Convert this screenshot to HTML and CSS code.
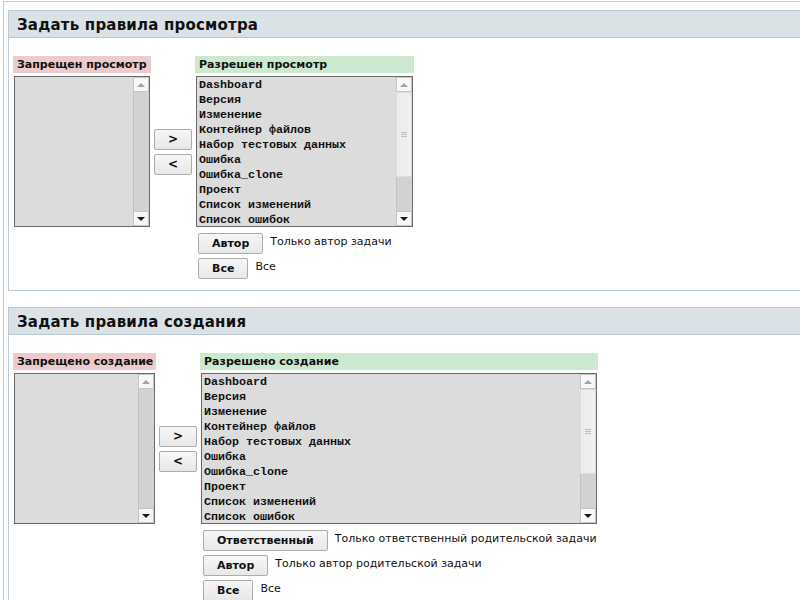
FILE: index.html
```html
<!DOCTYPE html>
<html lang="ru">
<head>
<meta charset="utf-8">
<title>Правила</title>
<link rel="stylesheet" href="styles.css">
</head>
<body>
<div class="page">
  <section class="panel">
    <h2 class="panel-title">Задать правила просмотра</h2>
    <div class="rules rules-view">
      <div class="lbl lbl-deny">Запрещен просмотр</div>
      <div class="spacer"></div>
      <div class="lbl lbl-allow">Разрешен просмотр</div>

      <div class="listbox">
        <div class="items"></div>
        <div class="sb">
          <div class="sb-btn sb-up"><span class="tri-up"></span></div>
          <div class="sb-track"></div>
          <div class="sb-btn sb-down"><span class="tri-down"></span></div>
        </div>
      </div>
      <div class="moves">
        <button class="btn btn-move">&gt;</button>
        <button class="btn btn-move">&lt;</button>
      </div>
      <div class="listbox">
        <div class="items">
          <div>Dashboard</div>
          <div>Версия</div>
          <div>Изменение</div>
          <div>Контейнер файлов</div>
          <div>Набор тестовых данных</div>
          <div>Ошибка</div>
          <div>Ошибка_clone</div>
          <div>Проект</div>
          <div>Список изменений</div>
          <div>Список ошибок</div>
        </div>
        <div class="sb">
          <div class="sb-btn sb-up"><span class="tri-up"></span></div>
          <div class="sb-thumb"><span class="grip"></span></div>
          <div class="sb-track sb-track-low"></div>
          <div class="sb-btn sb-down"><span class="tri-down"></span></div>
        </div>
      </div>

      <div class="spacer"></div>
      <div class="spacer"></div>
      <div class="opts">
        <div class="opt"><button class="btn">Автор</button><span class="opt-text">Только автор задачи</span></div>
        <div class="opt"><button class="btn">Все</button><span class="opt-text">Все</span></div>
      </div>
    </div>
  </section>

  <section class="panel">
    <h2 class="panel-title">Задать правила создания</h2>
    <div class="rules rules-create">
      <div class="lbl lbl-deny">Запрещено создание</div>
      <div class="spacer"></div>
      <div class="lbl lbl-allow">Разрешено создание</div>

      <div class="listbox">
        <div class="items"></div>
        <div class="sb">
          <div class="sb-btn sb-up"><span class="tri-up"></span></div>
          <div class="sb-track"></div>
          <div class="sb-btn sb-down"><span class="tri-down"></span></div>
        </div>
      </div>
      <div class="moves">
        <button class="btn btn-move">&gt;</button>
        <button class="btn btn-move">&lt;</button>
      </div>
      <div class="listbox">
        <div class="items">
          <div>Dashboard</div>
          <div>Версия</div>
          <div>Изменение</div>
          <div>Контейнер файлов</div>
          <div>Набор тестовых данных</div>
          <div>Ошибка</div>
          <div>Ошибка_clone</div>
          <div>Проект</div>
          <div>Список изменений</div>
          <div>Список ошибок</div>
        </div>
        <div class="sb">
          <div class="sb-btn sb-up"><span class="tri-up"></span></div>
          <div class="sb-thumb"><span class="grip"></span></div>
          <div class="sb-track sb-track-low"></div>
          <div class="sb-btn sb-down"><span class="tri-down"></span></div>
        </div>
      </div>

      <div class="spacer"></div>
      <div class="spacer"></div>
      <div class="opts">
        <div class="opt"><button class="btn">Ответственный</button><span class="opt-text">Только ответственный родительской задачи</span></div>
        <div class="opt"><button class="btn">Автор</button><span class="opt-text">Только автор родительской задачи</span></div>
        <div class="opt"><button class="btn">Все</button><span class="opt-text">Все</span></div>
      </div>
    </div>
  </section>
</div>
</body>
</html>
```
FILE: styles.css
```css
html, body {
  margin: 0;
  padding: 0;
  overflow: hidden;
  background: #ffffff;
}
body {
  font-family: "DejaVu Sans", Verdana, sans-serif;
  font-size: 11px;
  color: #111;
}
.page {
  width: 1000px;
  margin: 1px 0 0 3px;
  border-top: 1px solid #bccbd7;
  border-left: 1px solid #bccbd7;
  padding: 8px 0 0 4px;
}
.panel {
  border: 1px solid #b9c9d6;
  margin-bottom: 16px;
  padding: 0 0 11px 0;
}
.panel-title {
  margin: 0;
  height: 26px;
  line-height: 28px;
  padding-left: 8px;
  background: #dbe2e6;
  border-bottom: 1px solid #b6c6d2;
  font-size: 15px;
  font-weight: bold;
  letter-spacing: 0.2px;
  color: #111;
  overflow: hidden;
}
.rules {
  display: grid;
  grid-template-rows: 17px 151px auto;
  row-gap: 3px;
  margin: 18px 0 0 4px;
}
.rules-view { grid-template-columns: 138px 44px 219px; }
.rules-create { grid-template-columns: 143px 44px 398px; }
.lbl {
  line-height: 17px;
  height: 17px;
  padding-left: 4px;
  font-weight: bold;
  font-size: 11px;
  white-space: nowrap;
}
.lbl-deny { background: #ebcbcb; }
.lbl-allow { background: #cce9cf; }
.listbox {
  margin: 0 1px;
  border: 1px solid #6a6a6a;
  background: #dcdcdc;
  display: flex;
  overflow: hidden;
}
.items {
  flex: 1;
  padding: 1px 0 0 2px;
  font-family: "Liberation Mono", "Courier New", monospace;
  font-weight: bold;
  font-size: 11.67px;
  line-height: 15px;
  color: #111;
  white-space: nowrap;
}
.sb {
  width: 16px;
  display: flex;
  flex-direction: column;
  background: #d3d3d3;
}
.sb-btn {
  height: 15px;
  box-sizing: border-box;
  background: #f7f7f7;
  border: 1px solid #c4c4c4;
  display: flex;
  align-items: center;
  justify-content: center;
}
.tri-up {
  width: 0; height: 0;
  border-left: 4px solid transparent;
  border-right: 4px solid transparent;
  border-bottom: 4px solid #a3a3a3;
}
.tri-down {
  width: 0; height: 0;
  border-left: 4px solid transparent;
  border-right: 4px solid transparent;
  border-top: 4px solid #1a1a1a;
}
.sb-track {
  flex: 1;
  background: #d2d2d2;
  border-left: 1px solid #c2c2c2;
}
.sb-thumb {
  height: 85px;
  box-sizing: border-box;
  background: #eeeeee;
  border: 1px solid #dcdcdc;
  display: flex;
  align-items: center;
  justify-content: center;
}
.grip {
  width: 6px;
  height: 5px;
  background: repeating-linear-gradient(#bdbdbd 0 1px, transparent 1px 2px);
}
.sb-track-low { flex: 1; }
.moves {
  display: flex;
  flex-direction: column;
  justify-content: center;
  gap: 4px;
  padding-left: 3px;
}
.btn {
  font-family: "DejaVu Sans", Verdana, sans-serif;
  font-weight: bold;
  font-size: 11px;
  color: #111;
  height: 21px;
  padding: 0 13px;
  margin: 0;
  background: linear-gradient(#f6f6f6, #e8e8e8);
  border: 1px solid #acacac;
  border-radius: 2px;
  line-height: 19px;
}
.btn-move {
  width: 38px;
  padding: 0;
  font-size: 12px;
}
.opts {
  display: flex;
  flex-direction: column;
  gap: 4px;
  margin-top: 3px;
  padding-left: 3px;
}
.opt {
  display: flex;
  align-items: flex-start;
  gap: 7px;
}
.opt-text {
  font-size: 11px;
  line-height: 16px;
  padding-top: 1px;
  white-space: nowrap;
}
```
